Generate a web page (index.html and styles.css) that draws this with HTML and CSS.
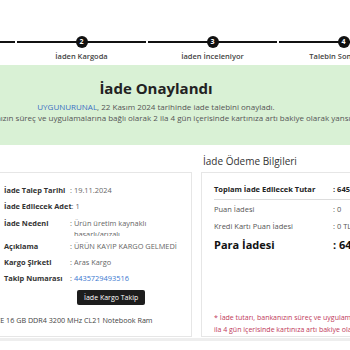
FILE: index.html
```html
<!DOCTYPE html>
<html lang="tr">

<head>
    <meta charset="UTF-8">
    <meta name="viewport" content="width=device-width, initial-scale=1.0">
    <title>İade Detayı</title>
    <link rel="stylesheet" href="styles.css">
</head>

<body>
    <div class="page">
        <!-- iade adımları -->
        <div class="steps">
            <div class="step"><span class="dot">1</span><span class="step-label">İade Talebi</span></div>
            <div class="step"><span class="dot">2</span><span class="step-label">İaden Kargoda</span></div>
            <div class="step"><span class="dot">3</span><span class="step-label">İaden İnceleniyor</span></div>
            <div class="step"><span class="dot">4</span><span class="step-label">Talebin Sonuçlandı</span></div>
            <div class="step"><span class="dot">5</span><span class="step-label">Para İadesi</span></div>
        </div>

        <!-- onay mesajı -->
        <div class="alert">
            <h2>İade Onaylandı</h2>
            <p><a href="#" class="seller">UYGUNURUNAL</a>, 22 Kasım 2024 tarihinde iade talebini onayladı.</p>
            <p>İade tutarı, bankanızın süreç ve uygulamalarına bağlı olarak 2 ila 4 gün içerisinde kartınıza artı bakiye olarak yansıyacaktır.</p>
        </div>

        <div class="detail">
            <div class="left-col">
                <div class="card return-card">
                    <div class="return-info">
                        <div class="row"><span class="label">İade Talep Tarihi</span><span class="colon">:</span><span class="value">19.11.2024</span></div>
                        <div class="row"><span class="label short">İade Edilecek Adet</span><span class="colon">:</span><span class="value">1</span></div>
                        <div class="row"><span class="label">İade Nedeni</span><span class="colon">:</span><span class="value">Ürün üretim kaynaklı hasarlı/arızalı</span></div>
                        <div class="row"><span class="label">Açıklama</span><span class="colon">:</span><span class="value wide">ÜRÜN KAYIP KARGO GELMEDİ</span></div>
                        <div class="row"><span class="label">Kargo Şirketi</span><span class="colon">:</span><span class="value">Aras Kargo</span></div>
                        <div class="row"><span class="label">Takip Numarası</span><span class="colon">:</span><a href="#" class="value track">4435729493516</a></div>
                        <button class="track-btn">İade Kargo Takip</button>
                    </div>
                    <div class="product-name">Corsair VENGEANCE 16 GB DDR4 3200 MHz CL21 Notebook Ram</div>
                </div>
            </div>

            <div class="right-col">
                <h3>İade Ödeme Bilgileri</h3>
                <div class="card pay-card">
                    <div class="pay-row total"><span class="pay-label">Toplam İade Edilecek Tutar</span><span class="pay-value">: 645,00 TL</span></div>
                    <div class="pay-row"><span class="pay-label">Puan İadesi</span><span class="pay-value">: 0</span></div>
                    <div class="pay-row"><span class="pay-label">Kredi Kartı Puan İadesi</span><span class="pay-value">: 0 TL</span></div>
                    <div class="pay-row big"><span class="pay-label">Para İadesi</span><span class="pay-value">: 645,00 TL</span></div>
                    <p class="note">* İade tutarı, bankanızın süreç ve uygulamalarına bağlı olarak 2 ila 4 gün içerisinde kartınıza artı bakiye olarak yansıyacaktır.</p>
                </div>
            </div>
        </div>

        <div class="bottom-line"></div>
    </div>
</body>

</html>
```

FILE: styles.css
```css
body {
    margin: 0;
    overflow: hidden;
    font-family: "Open Sans", "Noto Sans", sans-serif;
    color: #333;
    background-color: #fff;
}

.page {
    width: 700px;
    margin-left: -194px;
}

/* adımlar */
.steps {
    display: flex;
    padding-left: 79px;
    height: 65px;
}

.step {
    position: relative;
    flex: 0 0 131px;
    display: flex;
    flex-direction: column;
    align-items: center;
    padding-top: 36px;
    box-sizing: border-box;
}

.step::before {
    content: "";
    position: absolute;
    left: 1px;
    right: 1px;
    top: 41px;
    height: 2px;
    background-color: #111;
}

.dot {
    position: relative;
    width: 12px;
    height: 12px;
    border-radius: 50%;
    background-color: #111;
    color: #fff;
    font-size: 7px;
    font-weight: 700;
    line-height: 12px;
    text-align: center;
}

.step-label {
    margin-top: 3px;
    font-size: 7.5px;
    font-weight: 600;
    color: #444;
    white-space: nowrap;
}

/* onay kutusu */
.alert {
    height: 80px;
    padding-top: 13px;
    box-sizing: border-box;
    background-color: #d9f1d5;
    text-align: center;
}

.alert h2 {
    margin: 0 0 4px;
    font-size: 15px;
    font-weight: 700;
    color: #222;
    line-height: 20px;
}

.alert p {
    margin: 0;
    font-size: 8px;
    line-height: 10.5px;
    color: #555;
    white-space: nowrap;
}

.seller {
    color: #3a6fc4;
    text-decoration: none;
}

/* detaylar */
.detail {
    display: flex;
    gap: 9px;
    padding-left: 34px;
    margin-top: 27px;
}

.card {
    border: 1px solid #e6e6e6;
    background-color: #fff;
    box-sizing: border-box;
}

.left-col {
    flex: 0 0 352px;
}

.return-card {
    height: 165px;
    padding-left: 163px;
    padding-top: 12px;
}

.row {
    display: flex;
    font-size: 7.4px;
    line-height: 11px;
    margin-bottom: 5.3px;
}

.label {
    flex: 0 0 66px;
    font-weight: 700;
    color: #333;
    white-space: nowrap;
}

.label.short {
    flex: 0 0 auto;
}

.colon {
    color: #666;
    margin-right: 2px;
}

.value {
    width: 78px;
    max-height: 18px;
    overflow: hidden;
    color: #666;
}

.value.wide {
    width: auto;
    white-space: nowrap;
}

.track {
    color: #3a78d0;
    text-decoration: none;
}

.track-btn {
    display: block;
    margin: 0 0 0 73px;
    padding: 0 7px;
    height: 15px;
    line-height: 15px;
    border: none;
    border-radius: 2px;
    background-color: #1d1d1d;
    color: #fff;
    font-family: inherit;
    font-size: 7px;
}

.product-name {
    margin: 10px 0 0 -67px;
    font-size: 7.2px;
    line-height: 11px;
    color: #444;
    white-space: nowrap;
}

.right-col {
    flex: 0 0 300px;
    margin-top: -18px;
}

.right-col h3 {
    margin: 0 0 3px 2px;
    font-size: 10px;
    font-weight: 400;
    line-height: 15px;
    color: #333;
}

.pay-card {
    height: 165px;
    padding: 9px 12px 0;
    display: flex;
    flex-direction: column;
}

.pay-row {
    display: flex;
    font-size: 7.5px;
    line-height: 10px;
    color: #555;
    padding: 2px 0;
    margin-bottom: 3px;
}

.pay-row.total {
    font-weight: 700;
    color: #222;
    padding-bottom: 5px;
    border-bottom: 1px solid #ddd;
    margin-bottom: 2px;
}

.pay-row.big {
    margin-top: 0;
    font-size: 11px;
    line-height: 14px;
    font-weight: 700;
    color: #111;
}

.pay-label {
    flex: 0 0 119px;
    white-space: nowrap;
}

.pay-value {
    white-space: nowrap;
}

.note {
    max-width: 206px;
    margin: auto 0 0;
    font-size: 7px;
    line-height: 12px;
    color: #c0395a;
}

.bottom-line {
    height: 3px;
    margin-top: 1px;
    background-color: #eee;
}
```
